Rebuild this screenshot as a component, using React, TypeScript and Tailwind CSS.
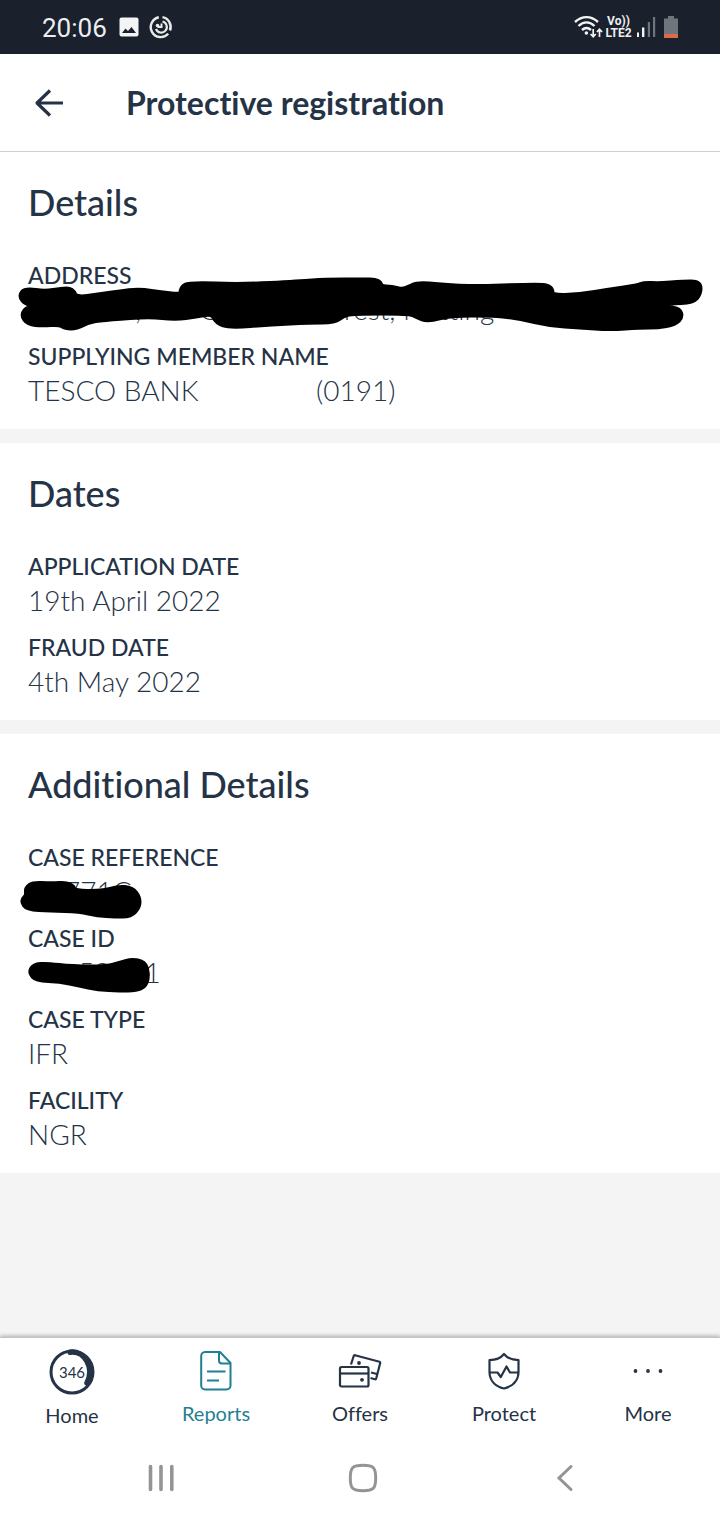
import type { ReactNode } from "react";

interface Field {
  label: string;
  value: ReactNode;
}

type Point = [number, number];

// Closed curve that runs through the middle of every edge
function smoothPath(points: Point[]) {
  const mid = (a: Point, b: Point) => `${(a[0] + b[0]) / 2} ${(a[1] + b[1]) / 2}`;
  const last = points[points.length - 1];
  const curves = points.map((p, i) => `Q${p[0]} ${p[1]} ${mid(p, points[(i + 1) % points.length])}`);
  return `M${mid(last, points[0])} ${curves.join(" ")} Z`;
}

// Black marker scribble drawn over a private value
function Scribble({ points, viewBox, className }: { points: Point[]; viewBox: string; className: string }) {
  return (
    <svg viewBox={viewBox} className={`absolute max-w-none ${className}`} aria-hidden="true">
      <path d={smoothPath(points)} fill="#000" stroke="#000" strokeWidth="9" strokeLinejoin="round" />
    </svg>
  );
}

const ADDRESS_MARKS: Point[] = [
  [22, 296], [26, 291], [45, 294], [62, 291], [71, 291], [75, 300], [100, 297], [125, 293], [142, 292],
  [160, 295], [183, 297], [183, 289], [190, 285], [240, 287], [300, 284], [325, 282], [362, 282], [378, 282],
  [380, 289], [392, 289], [402, 292], [410, 289], [418, 285], [440, 287], [470, 289], [535, 287], [550, 288],
  [550, 298], [580, 297], [610, 292], [638, 288], [645, 285], [658, 286], [684, 284], [698, 284], [698, 293],
  [692, 300], [670, 301], [640, 305], [645, 311], [676, 309], [680, 316], [674, 322], [658, 325], [640, 325],
  [610, 327], [580, 325], [550, 323], [520, 316], [495, 313], [450, 313], [428, 319], [418, 315], [410, 311],
  [352, 311], [342, 314], [334, 320], [310, 320], [270, 322], [230, 325], [218, 321], [213, 311], [196, 314],
  [175, 317], [150, 314], [110, 317], [90, 319], [76, 326], [66, 326], [60, 322], [42, 323], [29, 322],
  [24, 315], [29, 309], [46, 306], [27, 302],
];

const REFERENCE_MARKS: Point[] = [
  [28, 889], [34, 885], [50, 886], [70, 885], [74, 894], [106, 893], [118, 889], [131, 890], [137, 898],
  [137, 906], [130, 914], [115, 914], [98, 913], [80, 909], [50, 908], [28, 907], [24, 901], [29, 896],
];

const ID_MARKS: Point[] = [
  [35, 967], [46, 966], [72, 969], [108, 969], [120, 965], [132, 962], [143, 964], [146, 974], [144, 984],
  [136, 988], [120, 988], [98, 987], [80, 983], [60, 979], [37, 978], [32, 972],
];

function HiddenAddress() {
  return (
    <>
      <span className="ml-[107px]">,</span>
      <span className="ml-[58px]">C</span>
      <span className="ml-[126px]">rest, Notting</span>
      <span className="ml-[150px]">11</span>
      <Scribble
        points={ADDRESS_MARKS}
        viewBox="18 275 690 60"
        className="-top-[16px] -left-[10px] h-[60px] w-[690px]"
      />
    </>
  );
}

function HiddenReference() {
  return (
    <>
      <span className="ml-9">771C</span>
      <Scribble
        points={REFERENCE_MARKS}
        viewBox="18 875 140 50"
        className="top-[2px] -left-[10px] h-[50px] w-[140px]"
      />
    </>
  );
}

function HiddenId() {
  return (
    <>
      <span className="ml-[50px]">50</span>
      <span className="ml-[34px]">1</span>
      <Scribble
        points={ID_MARKS}
        viewBox="18 955 140 50"
        className="top-[1px] -left-[10px] h-[50px] w-[140px]"
      />
    </>
  );
}

const SECTIONS: { title: string; fields: Field[] }[] = [
  {
    title: "Details",
    fields: [
      { label: "ADDRESS", value: <HiddenAddress /> },
      {
        label: "SUPPLYING MEMBER NAME",
        value: (
          <>
            <span className="w-[288px]">TESCO BANK</span>
            <span>(0191)</span>
          </>
        ),
      },
    ],
  },
  {
    title: "Dates",
    fields: [
      { label: "APPLICATION DATE", value: "19th April 2022" },
      { label: "FRAUD DATE", value: "4th May 2022" },
    ],
  },
  {
    title: "Additional Details",
    fields: [
      { label: "CASE REFERENCE", value: <HiddenReference /> },
      { label: "CASE ID", value: <HiddenId /> },
      { label: "CASE TYPE", value: "IFR" },
      { label: "FACILITY", value: "NGR" },
    ],
  },
];

function StatusBar() {
  return (
    <div className="flex h-[54px] shrink-0 items-center bg-[#1a202c] pr-[42px] pl-[42px] font-[Roboto,sans-serif] text-[#eceff1]">
      <span className="pt-[2px] text-[26px] leading-8">20:06</span>
      <svg viewBox="0 0 20 20" className="ml-3 size-5" aria-hidden="true">
        <rect x="0.5" y="0.5" width="19" height="19" rx="2" fill="#f3f4f5" />
        <path d="M3 16 L6.5 11.5 L9 14 L12.5 10 L17 16 Z" fill="#1a202c" />
      </svg>
      <svg viewBox="0 0 24 24" className="ml-[10px] size-6" fill="none" stroke="#e8eaec" aria-hidden="true">
        <path d="M9.8 2.3 A10 10 0 1 0 19.2 18.8" strokeWidth="2.4" />
        <path d="M13.5 2.1 A10 10 0 0 1 21 15.5" strokeWidth="2.4" />
        <path d="M13.5 6.5 A5.6 5.6 0 1 1 7 14" strokeWidth="2.2" />
        <path d="M12.500 8.500 V12 H8.500" strokeWidth="2" />
        <circle cx="8.500" cy="10.500" r="1.800" fill="#e8eaec" stroke="none" />
      </svg>
      <div className="ml-auto flex items-center">
        <svg viewBox="0 0 30 26" className="h-[26px] w-[30px]" fill="none" stroke="#f3f4f5" aria-hidden="true">
          <path d="M1 8 C8 1.5 17 1.5 24 8" strokeWidth="2.4" />
          <path d="M4.5 12 C9.5 7.3 15.5 7.3 20.5 12" strokeWidth="2.4" />
          <path d="M8 16 C11 13.2 14 13.2 17 16" strokeWidth="2.4" />
          <circle cx="12.4" cy="19" r="1.8" fill="#f3f4f5" stroke="none" />
          <path d="M19.2 15 V22.5 M16.6 20 L19.2 22.7 L21.8 20" strokeWidth="1.7" />
          <path d="M25.5 23 V15.5 M22.9 18 L25.5 15.3 L28.1 18" strokeWidth="1.7" />
        </svg>
        <div className="w-[29px] text-center text-[12px] leading-3 font-bold">
          <div>Vo))</div>
          <div>LTE2</div>
        </div>
        <svg viewBox="0 0 19 20" className="ml-1 h-5 w-[19px]" aria-hidden="true">
          <path d="M0 15.5 h2 v4.5 h-2z M5 10.5 h2.4 v9.500 h-2.4z" fill="#f3f4f5" />
          <path d="M10.800 5 h2.200 v15 h-2.200z M16 0 h2.200 v20 h-2.200z" fill="#6f757d" />
        </svg>
        <svg viewBox="0 0 14 22" className="ml-2 h-[22px] w-[14px]" aria-hidden="true">
          <path d="M4 0 h6 v2.500 h4 v15.500 H0 V2.500 h4z" fill="#6f757d" />
          <path d="M0 18 h14 v4 H0z" fill="#e0694a" />
        </svg>
      </div>
    </div>
  );
}

function HomeIcon() {
  return (
    <span className="relative flex size-[46px] items-center justify-center">
      <svg viewBox="0 0 46 46" className="absolute inset-0" fill="none" stroke="#253346" aria-hidden="true">
        <circle cx="23" cy="23" r="21" strokeWidth="3" />
        <path d="M21 3.200 C35 1 46 18 38 34" strokeWidth="5.500" strokeLinecap="round" />
      </svg>
      <span className="text-[15px] leading-none">346</span>
    </span>
  );
}

const TABS: { label: string; icon: ReactNode; active?: boolean }[] = [
  { label: "Home", icon: <HomeIcon /> },
  {
    label: "Reports",
    active: true,
    icon: (
      <svg viewBox="0 0 32 40" className="h-10 w-8" fill="none" stroke="currentColor" strokeWidth="2" strokeLinejoin="round" aria-hidden="true">
        <path d="M5 1 H20 L30.500 12 V34.500 A4 4 0 0 1 26.500 38.500 H5 A4 4 0 0 1 1.200 34.500 V5 A4 4 0 0 1 5 1 Z" />
        <path d="M19 1 V9.500 Q19 12.500 22 12.500 H30" />
        <path d="M7 20.500 H25.500 M7 29.500 H19" />
      </svg>
    ),
  },
  {
    label: "Offers",
    icon: (
      <svg viewBox="0 0 44 36" className="h-9 w-11" fill="none" stroke="currentColor" strokeWidth="2.200" strokeLinejoin="round" aria-hidden="true">
        <rect x="2" y="14" width="28.500" height="19.500" rx="1.500" />
        <path d="M2 20.500 H30.500" />
        <path d="M13 11.500 L15.700 3 Q16 2 17 2.200 L41.500 8.700 Q42.500 9 42.200 10 L38.200 25.500 Q37.900 26.500 36.800 26.200 L32.500 25" />
        <path d="M33 19.500 L39 21" />
        <circle cx="21" cy="10" r="1.900" fill="currentColor" stroke="none" />
        <circle cx="24" cy="26.800" r="1.900" fill="currentColor" stroke="none" />
      </svg>
    ),
  },
  {
    label: "Protect",
    icon: (
      <svg viewBox="0 0 32 38" className="h-[38px] w-8" fill="none" stroke="currentColor" strokeWidth="2.200" strokeLinejoin="round" aria-hidden="true">
        <path d="M16 2 C18.500 5.200 23 8 30.500 8.200 V20 C30.500 29 24 34.500 16 36.500 C8 34.500 1.500 29 1.500 20 V8.200 C9 8 13.500 5.200 16 2 Z" />
        <path d="M1.500 20.500 H9.500 L12.800 25 L18.500 14.500 L22 20.500 H30.500" />
      </svg>
    ),
  },
  {
    label: "More",
    icon: (
      <svg viewBox="0 0 30 4" className="h-1 w-[30px]" fill="currentColor" aria-hidden="true">
        <circle cx="2.500" cy="2" r="1.900" />
        <circle cx="15" cy="2" r="1.900" />
        <circle cx="27.500" cy="2" r="1.900" />
      </svg>
    ),
  },
];

function TabBar() {
  return (
    <nav className="grid h-[99px] grid-cols-5 items-start border-t border-[#c4c4c4] bg-white pt-[11px] shadow-[0_-1px_4px_rgba(0,0,0,0.3)]">
      {TABS.map((tab) => (
        <button
          key={tab.label}
          type="button"
          className={`flex flex-col items-center gap-2 text-[20px] leading-6 ${tab.active ? "text-[#1f7f93]" : "text-[#253346]"}`}
        >
          <span className="flex min-h-11 items-center justify-center">{tab.icon}</span>
          {tab.label}
        </button>
      ))}
    </nav>
  );
}

function SystemNav() {
  return (
    <div className="grid h-[84px] grid-cols-3 bg-white pr-[54px] pl-[60px] text-[#949494]">
      <button type="button" aria-label="Recent apps" className="flex items-center justify-center">
        <svg viewBox="0 0 28 28" className="size-7" stroke="currentColor" strokeWidth="3.600" strokeLinecap="round" aria-hidden="true">
          <path d="M3.500 2.500 V25.500 M14 2.500 V25.500 M24.800 2.500 V25.500" />
        </svg>
      </button>
      <button type="button" aria-label="Home screen" className="flex items-center justify-center">
        <svg viewBox="0 0 30 30" className="size-[30px]" fill="none" stroke="currentColor" strokeWidth="3" aria-hidden="true">
          <path d="M15 2.300 C25.500 2.300 27.700 4.500 27.700 15 C27.700 25.500 25.500 27.700 15 27.700 C4.500 27.700 2.300 25.500 2.300 15 C2.300 4.500 4.500 2.300 15 2.300 Z" />
        </svg>
      </button>
      <button type="button" aria-label="Back" className="flex items-center justify-center">
        <svg viewBox="0 0 18 28" className="h-7 w-[18px]" fill="none" stroke="currentColor" strokeWidth="3" strokeLinecap="round" aria-hidden="true">
          <path d="M15 2.500 L3 14 L15 25.500" />
        </svg>
      </button>
    </div>
  );
}

export default function App() {
  return (
    <div className="flex min-h-screen flex-col bg-[#f4f4f4] font-[Lato,sans-serif] text-[#253346] [font-variant-ligatures:none]">
      <StatusBar />
      <header className="flex h-[98px] shrink-0 items-center border-b border-[#cfd1d3] bg-white px-[34px]">
        <button type="button" aria-label="Go back" className="mr-[62px]">
          <svg viewBox="0 0 30 28" className="h-7 w-[30px]" fill="none" stroke="currentColor" strokeWidth="3.200" aria-hidden="true">
            <path d="M29 14 H3 M16 1.500 L3 14 L16 26.500" strokeLinejoin="round" />
          </svg>
        </button>
        <h1 className="text-[32px] leading-10 font-bold">Protective registration</h1>
      </header>
      <main className="flex flex-1 flex-col gap-[14px]">
        {SECTIONS.map((section) => (
          <section key={section.title} className="bg-white px-7 pt-[27px] pb-5">
            <h2 className="mb-[34px] text-[36px] leading-[46px] font-medium">{section.title}</h2>
            <dl className="flex flex-col gap-3">
              {section.fields.map((field) => (
                <div key={field.label}>
                  <dt className="text-[23px] leading-8 font-medium">{field.label}</dt>
                  <dd className="relative flex h-[37px] text-[28px] leading-[37px] font-light whitespace-nowrap">
                    {field.value}
                  </dd>
                </div>
              ))}
            </dl>
          </section>
        ))}
      </main>
      <TabBar />
      <SystemNav />
    </div>
  );
}
